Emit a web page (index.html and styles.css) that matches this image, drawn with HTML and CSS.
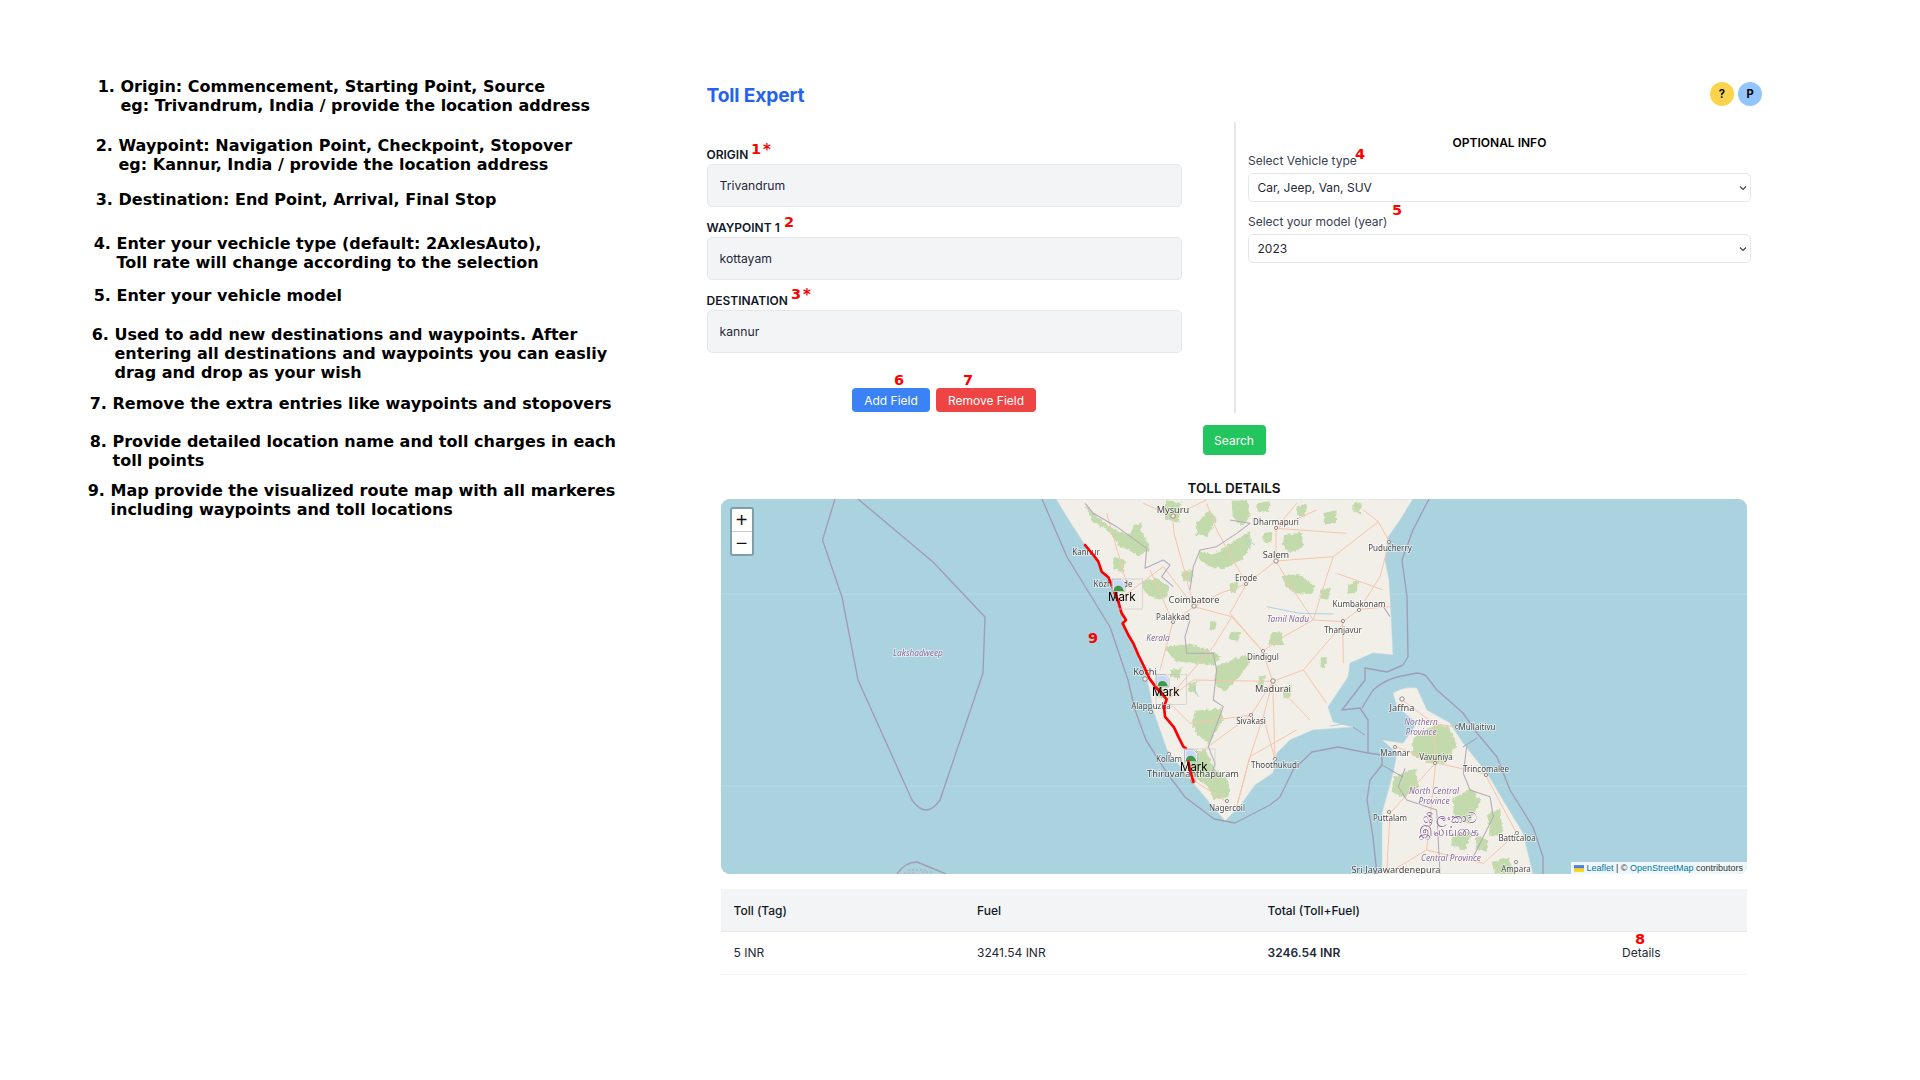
FILE: index.html
```html
<!DOCTYPE html>
<html lang="en">
<head>
<meta charset="utf-8">
<title>Toll Expert</title>
<link rel="stylesheet" href="styles.css">
</head>
<body>
<div class="page">
  <aside class="guide">
    <ol class="steps">
      <li class="s1">Origin: Commencement, Starting Point, Source<br>eg: Trivandrum, India / provide the location address</li>
      <li class="s2">Waypoint: Navigation Point, Checkpoint, Stopover<br>eg: Kannur, India / provide the location address</li>
      <li class="s3">Destination: End Point, Arrival, Final Stop</li>
      <li class="s4">Enter your vechicle type (default: 2AxlesAuto),<br>Toll rate will change according to the selection</li>
      <li class="s5">Enter your vehicle model</li>
      <li class="s6">Used to add new destinations and waypoints. After<br>entering all destinations and waypoints you can easliy<br>drag and drop as your wish</li>
      <li class="s7">Remove the extra entries like waypoints and stopovers</li>
      <li class="s8">Provide detailed location name and toll charges in each<br>toll points</li>
      <li class="s9">Map provide the visualized route map with all markeres<br>including waypoints and toll locations</li>
    </ol>
  </aside>

  <main class="app">
    <header class="top">
      <h1 class="brand">Toll Expert</h1>
      <div class="avatars">
        <span class="avatar help">?</span>
        <span class="avatar user">P</span>
      </div>
    </header>

    <section class="form-row">
      <form class="route">
        <label class="field-label">ORIGIN</label>
        <input class="field" type="text" value="Trivandrum">
        <label class="field-label">WAYPOINT 1</label>
        <input class="field" type="text" value="kottayam">
        <label class="field-label">DESTINATION</label>
        <input class="field" type="text" value="kannur">
        <div class="field-actions">
          <button type="button" class="btn blue">Add Field</button>
          <button type="button" class="btn red">Remove Field</button>
        </div>
      </form>
      <div class="optional">
        <h2 class="optional-title">OPTIONAL INFO</h2>
        <label class="opt-label">Select Vehicle type</label>
        <select class="opt-select"><option>Car, Jeep, Van, SUV</option></select>
        <label class="opt-label second">Select your model (year)</label>
        <select class="opt-select"><option>2023</option></select>
      </div>
    </section>

    <div class="search-row"><button type="button" class="btn green">Search</button></div>
    <h2 class="details-title">TOLL DETAILS</h2>

    <div class="map">
      <svg class="map-svg" viewBox="721 499 1026 375" width="1026" height="375" xmlns="http://www.w3.org/2000/svg">
        <defs>
          <filter id="lumpy" x="-5%" y="-5%" width="110%" height="110%">
            <feTurbulence type="fractalNoise" baseFrequency=".09" numOctaves="3" seed="7" result="n"/>
            <feDisplacementMap in="SourceGraphic" in2="n" scale="13" xChannelSelector="R" yChannelSelector="G"/>
          </filter>
          <filter id="wiggle" x="-5%" y="-5%" width="110%" height="110%">
            <feTurbulence type="fractalNoise" baseFrequency=".12" numOctaves="2" seed="3" result="n"/>
            <feDisplacementMap in="SourceGraphic" in2="n" scale="3.5" xChannelSelector="R" yChannelSelector="G"/>
          </filter>
          <g id="marker">
            <rect class="mk-box" x="-1" y="0" width="92" height="90"/>
            <path class="mk-doc" d="M0,1 H26 L38,13 V38 H0 Z"/>
            <path class="mk-sky" d="M3,4 H25 L35,14 V30 H3 Z"/>
            <path class="mk-hill" d="M3,36 C6,22 12,20 18,20 C26,20 32,26 35,36 Z"/>
          </g>
        </defs>
        <rect class="sea" x="721" y="499" width="1026" height="375"/>
        <path class="seam" d="M721,594 H1747 M721,786 H1747"/>
        <!-- land -->
        <path class="land" d="M1056,499 L1070,522 L1085,545 L1095,557 L1102,572 L1110,580 L1115,593 L1122,613 L1123,623 L1130,637 L1137,653 L1143,667 L1147,680 L1150,693 L1153,710 L1160,730 L1167,750 L1183,770 L1193,783 L1210,803 L1225,821 L1240,806 L1255,785 L1273,773 L1277,753 L1290,740 L1313,730 L1353,727 L1333,722 L1328,707 L1348,677 L1350,663 L1373,653 L1393,655 L1391,613 L1389,580 L1385,560 L1388,537 L1400,520 L1413,499 Z"/>
        <path class="land" d="M1393,693 Q1405,686 1417,688 L1427,710 L1450,723 L1463,743 L1487,773 L1503,800 L1523,833 L1533,874 H1382 L1382,813 L1393,773 L1397,753 L1382,740 L1403,743 L1417,723 L1397,707 Z"/>
        <path class="water" d="M1330,726 l20,-3 M1397,740 l5,2"/>
        <!-- forest, mainland -->
        <g class="forest" transform="translate(1050 490) scale(.33333)">
          <path d="M105,45 L150,85 L190,118 L238,132 L258,102 L285,140 L300,180 L268,198 L236,180 L210,172 L182,128 L128,92 Z"/>
          <path d="M345,30 L395,40 L385,100 L345,85 Z"/>
          <path d="M250,105 L275,100 L272,150 L248,145 Z"/>
          <path d="M545,32 L590,30 L600,82 L575,108 L548,80 Z"/>
          <path d="M445,185 L495,192 L528,168 L598,125 L606,165 L578,208 L525,235 L482,232 L452,212 Z"/>
          <path d="M702,135 L755,128 L760,170 L722,190 L698,168 Z"/>
          <path d="M695,258 L745,252 L795,288 L785,312 L735,310 L708,292 Z"/>
          <path d="M275,272 L322,265 L360,292 L342,328 L302,320 L280,300 Z"/>
          <path d="M345,472 L418,462 L475,480 L515,500 L492,525 L430,520 L372,512 Z"/>
          <path d="M498,528 L585,495 L602,515 L562,565 L525,605 L495,585 Z"/>
          <path d="M435,662 L515,655 L520,688 L478,762 L442,735 L425,700 Z"/>
          <path d="M420,785 L465,778 L490,828 L540,880 L535,920 L492,930 L472,888 L425,855 Z"/>
          <path d="M665,425 L695,428 L700,465 L655,465 Z"/>
          <path d="M895,282 L925,270 L920,305 L892,312 Z"/>
          <path d="M812,505 L830,500 L826,535 L812,530 Z"/>
          <path d="M740,50 L770,40 L765,80 L742,75 Z"/>
          <path d="M640,130 L668,125 L664,160 L640,155 Z"/>
          <path d="M540,280 L565,275 L560,310 L540,305 Z"/>
          <path d="M480,395 L500,392 L496,420 L480,418 Z"/>
          <path d="M625,560 L645,555 L640,590 L622,585 Z"/>
          <path d="M320,600 L345,598 L342,625 L322,622 Z"/>
          <path d="M415,580 L440,575 L436,610 L418,605 Z"/>
          <path d="M540,430 L570,425 L566,452 L540,450 Z"/>
          <path d="M910,40 L935,35 L930,70 L910,66 Z"/>
          <path d="M810,300 L840,295 L835,330 L812,325 Z"/>
          <path d="M620,40 L660,34 L655,66 L622,62 Z"/>
          <path d="M440,100 L480,60 L500,90 L470,140 L440,135 Z"/>
          <path d="M820,70 L860,60 L858,100 L825,105 Z"/>
          <path d="M395,245 L430,240 L425,275 L398,270 Z"/>
          <path d="M190,200 L225,210 L220,250 L190,235 Z"/>
          <path d="M700,590 L725,585 L720,625 L700,620 Z"/>
          <path d="M360,540 L395,535 L390,565 L360,562 Z"/>
        </g>
        <g class="net" transform="translate(1050 490) scale(.33333)">
          <path class="roads" d="M368,78 L372,130 L400,230 L432,350 L368,398 M368,78 L280,40 M368,78 L470,30 M432,350 L510,310 L589,282 L678,213 L678,115 L740,40 M678,213 L730,300 L790,390 L878,395 L928,358 L1020,350 M589,282 L540,370 L638,484 L668,574 L640,680 L600,800 L560,950 M432,350 L545,380 L638,484 M790,390 L700,440 L638,484 M668,574 L603,675 M668,574 L760,540 L880,400 M668,574 L780,690 M603,675 L420,810 M430,870 L528,935 M430,870 L420,810 M350,630 L430,570 L668,574 M940,60 L985,95 L1018,155 L990,260 L928,358 M678,213 L850,200 L985,95 M678,115 L890,130 M350,630 L420,700 L603,675 M170,70 L230,280 M300,240 L370,400 M205,330 L340,230 L432,350 M640,680 L675,808 M668,574 L675,808 M470,40 L500,120 L589,282 M678,115 L800,60 M790,390 L830,260 L850,200 M878,395 L880,520 M760,540 L830,640 M560,950 L600,800 L740,720 M368,398 L330,540 M545,380 L490,470 L350,630 M860,250 L1000,300"/>
          <path class="borders-in" d="M105,40 L130,70 L200,110 L290,175 L285,235 L340,210 L360,225 L335,260 L370,290 M540,90 L600,100 L560,130 L500,170 L450,180 L430,230 L420,300 M420,390 L405,440 L410,490 L490,490 L500,540 L490,630 L520,650 L475,770 L495,820 L480,870 M1000,350 L1020,380"/>
          <path class="river" d="M650,350 L750,370 L850,372 M590,150 L615,165 M430,590 L445,620"/>
        </g>
        <!-- forest, Sri Lanka -->
        <g class="forest" transform="translate(1270 480) scale(.33333)">
          <path d="M430,775 L498,732 L535,742 L562,790 L525,852 L470,845 L425,825 Z"/>
          <path d="M370,892 L438,865 L445,925 L400,952 L365,935 Z"/>
          <path d="M550,955 L605,925 L632,962 L596,1032 L550,1005 Z"/>
          <path d="M652,1005 L690,985 L698,1055 L662,1072 Z"/>
          <path d="M618,1065 L655,1082 L650,1115 L618,1105 Z"/>
          <path d="M545,1065 L605,1055 L585,1112 L545,1095 Z"/>
          <path d="M665,1145 L715,1135 L735,1182 L675,1182 Z"/>
        </g>
        <g class="net" transform="translate(1270 480) scale(.33333)">
          <path class="roads" d="M397,660 L490,730 L560,742 M490,730 L497,848 L378,800 M497,848 L645,882 L740,1060 M497,848 L360,1000 L350,1182 M497,848 L470,1110 L350,1182 M470,1110 L640,1150 L740,1060"/>
          <path class="borders-in" d="M405,865 L385,920 L410,960 L500,990 L510,1182 M590,800 L580,880 L600,930 L660,950 L670,1010 L640,1070 L610,1130"/>
        </g>
        <!-- maritime boundaries -->
        <path class="mar" d="M1042,499 L1067,557 L1110,627 L1128,680 L1135,710 L1146,740 L1167,773 L1185,797 L1214,819 L1235,823 L1270,805 L1280,797 L1293,770 L1312,752 L1338,747 L1368,753 L1368,720 L1360,708 L1342,710 L1365,680 L1365,668 L1387,672 L1403,665 L1408,657 L1407,597 L1402,560 L1413,530 L1429,499"/>
        <path class="mar" d="M1362,708 L1373,690 Q1385,680 1397,677 L1417,673 Q1425,674 1427,677 L1437,690 L1463,713 L1477,733 L1497,757 L1510,790 L1533,827 L1543,857 L1543,874"/>
        <path class="mar" d="M1368,753 L1382,755 L1382,765 L1370,780 L1367,800 L1373,837 L1377,874"/>
        <path class="mar thin" d="M1477,738 L1463,747 M1382,765 L1403,777 M1353,727 L1365,735"/>
        <path class="mar" d="M835,499 L822.5,540 L842,597 L858,680 L912,800 Q926,820 940,800 L983,673 L985,617 L933,562 L858,499"/>
        <path class="mar" d="M897,874 Q905,862 917,862 L946,874"/>
        <path class="atoll" d="M904,873 h12 M922,872 h10 M908,870 h18"/>
        <!-- city dots -->
        <g class="dots">
          <circle cx="1173" cy="516" r="2.2"/><circle cx="1276" cy="528" r="1.6"/><circle cx="1276" cy="561" r="2.2"/>
          <circle cx="1246" cy="584" r="1.6"/><circle cx="1194" cy="606" r="2.2"/><circle cx="1173" cy="622" r="1.6"/>
          <circle cx="1359" cy="610" r="1.6"/><circle cx="1343" cy="621" r="1.6"/><circle cx="1389" cy="542" r="1.6"/>
          <circle cx="1263" cy="651" r="1.6"/><circle cx="1145" cy="679" r="2.2"/><circle cx="1273" cy="681" r="2.2"/>
          <circle cx="1151" cy="712" r="1.6"/><circle cx="1251" cy="715" r="1.6"/><circle cx="1169" cy="754" r="1.6"/>
          <circle cx="1275" cy="759" r="1.6"/><circle cx="1193" cy="781" r="2.2"/><circle cx="1227" cy="801" r="1.6"/>
          <circle cx="1402" cy="699" r="2.2"/><circle cx="1457" cy="727" r="1.6"/><circle cx="1395" cy="747" r="1.6"/>
          <circle cx="1435" cy="763" r="1.6"/><circle cx="1486" cy="775" r="1.6"/><circle cx="1389" cy="812" r="1.6"/>
          <circle cx="1517" cy="833" r="1.6"/><circle cx="1516" cy="862" r="1.6"/>
        </g>
        <!-- labels -->
        <g class="labels">
          <text class="big" x="1173" y="513">Mysuru</text>
          <text x="1276" y="525">Dharmapuri</text>
          <text class="big" x="1276" y="558">Salem</text>
          <text x="1246" y="581">Erode</text>
          <text class="big" x="1194" y="603">Coimbatore</text>
          <text x="1173" y="620">Palakkad</text>
          <text x="1086" y="555">Kannur</text>
          <text x="1113" y="587">Kozhikode</text>
          <text x="1359" y="607">Kumbakonam</text>
          <text x="1343" y="633">Thanjavur</text>
          <text x="1390" y="551">Puducherry</text>
          <text class="region" x="1288" y="622">Tamil Nadu</text>
          <text class="region" x="1158" y="641">Kerala</text>
          <text x="1263" y="660">Dindigul</text>
          <text class="big" x="1145" y="675">Kochi</text>
          <text class="big" x="1273" y="692">Madurai</text>
          <text x="1151" y="709">Alappuzha</text>
          <text x="1251" y="724">Sivakasi</text>
          <text x="1169" y="762">Kollam</text>
          <text x="1275" y="768">Thoothukudi</text>
          <text class="big" x="1193" y="777">Thiruvananthapuram</text>
          <text x="1227" y="811">Nagercoil</text>
          <text class="region" x="918" y="656">Lakshadweep</text>
          <text class="big" x="1402" y="711">Jaffna</text>
          <text class="region" x="1421" y="725">Northern</text>
          <text class="region" x="1421" y="735">Province</text>
          <text x="1477" y="730">Mullaitivu</text>
          <text x="1395" y="756">Mannar</text>
          <text x="1436" y="760">Vavuniya</text>
          <text x="1486" y="772">Trincomalee</text>
          <text class="region" x="1434" y="794">North Central</text>
          <text class="region" x="1434" y="804">Province</text>
          <text x="1390" y="821">Puttalam</text>
          <text class="region-up" x="1450" y="823">ශ්‍රී ලංකාව</text>
          <text class="region-up" x="1449" y="836">இலங்கை</text>
          <text x="1517" y="841">Batticaloa</text>
          <text class="region" x="1451" y="861">Central Province</text>
          <text x="1516" y="872">Ampara</text>
          <text class="big" x="1396" y="873">Sri Jayawardenepura</text>
        </g>
        <!-- route and markers -->
        <g transform="translate(1050 490) scale(.33333)">
          <path class="route-line" d="M105,165 L130,195 L145,215 L155,245 L175,262 L185,285 L195,310 L205,335 L215,370 L228,390 L218,400 L235,435 L250,460 L265,495 L280,525 L298,565 L318,592 L335,610 L350,628 L342,650 L345,680 L372,712 L385,740 L400,770 L408,775"/>
          <use href="#marker" x="187" y="267"/>
          <use href="#marker" x="319" y="553"/>
          <use href="#marker" x="404" y="777"/>
          <path class="route-line" d="M195,310 L205,335 M318,592 L335,610 M415,815 L420,840 L430,875"/>
        </g>
        <g class="mk-text">
          <text x="1112" y="601">Mark</text>
          <text x="1156" y="696">Mark</text>
          <text x="1184" y="771">Mark</text>
        </g>
      </svg>
      <div class="zoom-ctl">
        <span class="zoom-btn first">+</span>
        <span class="zoom-btn">−</span>
      </div>
      <div class="attrib">
        <svg class="flag" viewBox="0 0 12 8" width="10" height="7" xmlns="http://www.w3.org/2000/svg"><rect width="12" height="4" fill="#4C7BE1"/><rect y="4" width="12" height="4" fill="#FFD500"/></svg>
        <a class="attrib-link">Leaflet</a> | © <a class="attrib-link">OpenStreetMap</a> contributors
      </div>
    </div>

    <div class="toll-table">
      <div class="trow head">
        <span class="c1">Toll (Tag)</span><span class="c2">Fuel</span><span class="c3">Total (Toll+Fuel)</span><span class="c4"></span>
      </div>
      <div class="trow body">
        <span class="c1">5 INR</span><span class="c2">3241.54 INR</span><strong class="c3">3246.54 INR</strong><span class="c4">Details</span>
      </div>
    </div>
  </main>
</div>

<span class="mark n1">1</span><span class="mark star a1">*</span>
<span class="mark n2">2</span>
<span class="mark n3">3</span><span class="mark star a3">*</span>
<span class="mark n4">4</span>
<span class="mark n5">5</span>
<span class="mark n6">6</span>
<span class="mark n7">7</span>
<span class="mark n8">8</span>
<span class="mark n9">9</span>
</body>
</html>
```
FILE: styles.css
```css
* { box-sizing: border-box; }
html, body { margin: 0; padding: 0; background: #fff; }
body { position: relative; width: 1920px; height: 1080px; overflow: hidden; font-family: Inter, "Liberation Sans", sans-serif; color: #111827; }

.page { display: flex; align-items: flex-start; }

/* guide column */
.guide { width: 706px; flex: none; padding-top: 77px; }
.steps { margin: 0; padding: 0; font-family: "DejaVu Sans", sans-serif; font-weight: 700; font-size: 16px; line-height: 19px; color: #000; white-space: nowrap; list-style-position: outside; }
.s1 { margin-left: 120.5px; }
.s2 { margin-left: 118.5px; margin-top: 21px; }
.s3 { margin-left: 118.5px; margin-top: 15.6px; }
.s4 { margin-left: 116.5px; margin-top: 25.4px; }
.s5 { margin-left: 116.5px; margin-top: 14px; }
.s6 { margin-left: 114.5px; margin-top: 20px; }
.s7 { margin-left: 112.5px; margin-top: 12px; }
.s8 { margin-left: 112.5px; margin-top: 19px; }
.s9 { margin-left: 110.5px; margin-top: 10.6px; }

/* app column */
.app { width: 1056px; flex: none; padding-top: 82px; }
.top { display: flex; justify-content: space-between; align-items: center; height: 24px; padding-left: .5px; }
.brand { margin: 2px 0 0; font-size: 19.2px; line-height: 24px; font-weight: 700; letter-spacing: -.15px; color: #2563eb; }
.avatars { display: flex; gap: 4px; }
.avatar { width: 24px; height: 24px; border-radius: 50%; display: flex; align-items: center; justify-content: center; font-size: 11.2px; font-weight: 700; color: #000; }
.help { background: #fcd34d; }
.user { background: #93c5fd; }

.form-row { display: grid; grid-template-columns: 528px 1fr; margin-top: 16px; height: 291px; }
.route { display: flex; flex-direction: column; width: 475px; margin-left: .5px; padding-top: 25px; }
.field-label { font-size: 12px; line-height: 16px; font-weight: 600; color: #111827; margin-bottom: 1px; }
.field { height: 43px; margin: 0 0 13px; padding: 0 12px; width: 100%; background: #f3f4f6; border: 1px solid #e5e7eb; border-radius: 5px; font: 400 12.2px Inter, sans-serif; color: #1f2937; outline: none; }
.field-actions { display: flex; justify-content: center; gap: 6px; margin-top: 22px; }

.btn { height: 24px; padding: 0 11.5px; border: 0; border-radius: 4px; font: 400 12px Inter, sans-serif; color: #fff; }
.blue { background: #3b82f6; width: 78px; padding: 0; }
.red { background: #ef4444; width: 100px; padding: 0; }
.green { background: #22c55e; width: 63px; height: 30px; padding: 0; }

.optional { border-left: 2px solid #e5e7eb; padding: 13px 11px 0 12px; display: flex; flex-direction: column; }
.optional-title { margin: 0; text-align: center; font-size: 12px; line-height: 16px; font-weight: 600; color: #000; }
.opt-label { font-size: 12px; line-height: 16px; color: #374151; margin-top: 2px; margin-bottom: 4px; }
.opt-label.second { margin-top: 12px; }
.opt-select { height: 29px; width: 100%; appearance: none; -webkit-appearance: none; background: #fff url("data:image/svg+xml,%3Csvg xmlns='http://www.w3.org/2000/svg' viewBox='0 0 8 6'%3E%3Cpath d='M1 1.5l3 3 3-3' fill='none' stroke='%23374151' stroke-width='1.1'/%3E%3C/svg%3E") no-repeat right 3px center / 8px 6px; border: 1px solid #e5e7eb; border-radius: 5px; padding: 0 8.5px; font: 400 12px Inter, sans-serif; color: #1f2937; outline: none; }

.search-row { display: flex; justify-content: center; margin-top: 12px; }
.details-title { margin: 25px 0 0; text-align: center; font-size: 13.5px; line-height: 16px; font-weight: 600; color: #111; }

/* map */
.map { position: relative; width: 1026px; height: 375px; margin: 3px 15px 0; border-radius: 9px; overflow: hidden; background: #aad3df; }
.map-svg { display: block; filter: blur(.35px); }
.sea { fill: #aad3df; }
.seam { fill: none; stroke: #b9dbe5; stroke-width: 1; }
.land { fill: #f2efe9; stroke: #c3d6d8; stroke-width: .6; }
.water { fill: none; stroke: #aad3df; stroke-width: 1; }
.forest { filter: url(#lumpy); fill: #c3dbac; }
.net { filter: url(#wiggle); }
.roads { fill: none; stroke: #f6c4ac; stroke-width: 3; stroke-linejoin: round; }
.borders-in { fill: none; stroke: #b5a9bc; stroke-width: 3.2; stroke-linejoin: round; }
.river { fill: none; stroke: #aad3df; stroke-width: 3; }
.mar { fill: none; stroke: #a29db6; stroke-width: 1.4; stroke-linejoin: round; }
.mar.thin { stroke-width: 1; }
.atoll { fill: none; stroke: #b9a0b4; stroke-width: 1; stroke-dasharray: 2 2; }
.dots circle { fill: #f7f5f1; stroke: #77736c; stroke-width: .8; }
.labels text { font-family: "Noto Sans", sans-serif; font-size: 8px; fill: #474747; text-anchor: middle; paint-order: stroke; stroke: rgba(255,255,255,.65); stroke-width: 1.5px; }
.labels .big { font-size: 9.2px; }
.labels .region { font-style: italic; font-size: 8.3px; fill: #8a6a98; }
.labels .region-up { font-size: 14px; fill: #8a6a98; }
.route-line { fill: none; stroke: #f00; stroke-width: 8; stroke-linejoin: round; stroke-linecap: round; }
.mk-box { fill: none; stroke: #c9c9c5; stroke-width: 2; }
.mk-doc { fill: #fff; stroke: #9aa0a8; stroke-width: 2; }
.mk-sky { fill: #c9d8f6; }
.mk-hill { fill: #3f9b43; }
.mk-text text { font-family: Inter, sans-serif; font-size: 11.5px; fill: #000; transform: translateX(-4px); }

.zoom-ctl { position: absolute; left: 8.5px; top: 8px; width: 24px; display: flex; flex-direction: column; border: 2px solid rgba(0,0,0,.25); border-radius: 3px; background: #fff; background-clip: padding-box; }
.zoom-btn { height: 22px; display: flex; align-items: center; justify-content: center; font: 400 20px "Liberation Sans", sans-serif; color: #111; }
.zoom-btn.first { border-bottom: 1px solid #ccc; height: 23px; }
.attrib { position: absolute; right: 0; bottom: 0; height: 12px; padding: 0 4px 0 3px; background: rgba(255,255,255,.8); font: 400 9px/12px "Liberation Sans", sans-serif; color: #333; white-space: nowrap; }
.attrib-link { color: #0078a8; }
.flag { vertical-align: -.5px; }

/* table */
.toll-table { width: 1026px; margin: 15px 15px 0; font-size: 12px; color: #1f2937; }
.trow { display: flex; align-items: center; }
.head { height: 43px; padding-top: 1px; background: #f3f4f6; border-bottom: 1px solid #e5e7eb; font-weight: 500; color: #111827; }
.body { height: 43px; padding-bottom: 1px; border-bottom: 1px solid #f3f4f6; }
.c1 { width: 256px; padding-left: 12.5px; }
.c2 { width: 290.5px; }
.c3 { width: 354.5px; font-weight: 600; }
.head .c3 { font-weight: 500; }
.c4 { flex: 1; }

/* red annotation numerals laid over the screenshot */
.mark { position: absolute; font-family: "DejaVu Sans", sans-serif; font-weight: 700; font-size: 14.5px; line-height: 16px; color: #f00; transform: translate(-50%, -50%); }
.star { font-size: 15px; }
.n1 { left: 756px; top: 149px; }
.a1 { left: 767px; top: 150px; }
.n2 { left: 789px; top: 222px; }
.n3 { left: 796px; top: 294px; }
.a3 { left: 807px; top: 295px; }
.n4 { left: 1360px; top: 154px; }
.n5 { left: 1397px; top: 210px; }
.n6 { left: 899px; top: 380px; }
.n7 { left: 968px; top: 380px; }
.n8 { left: 1640px; top: 939px; }
.n9 { left: 1093px; top: 638px; }
```
